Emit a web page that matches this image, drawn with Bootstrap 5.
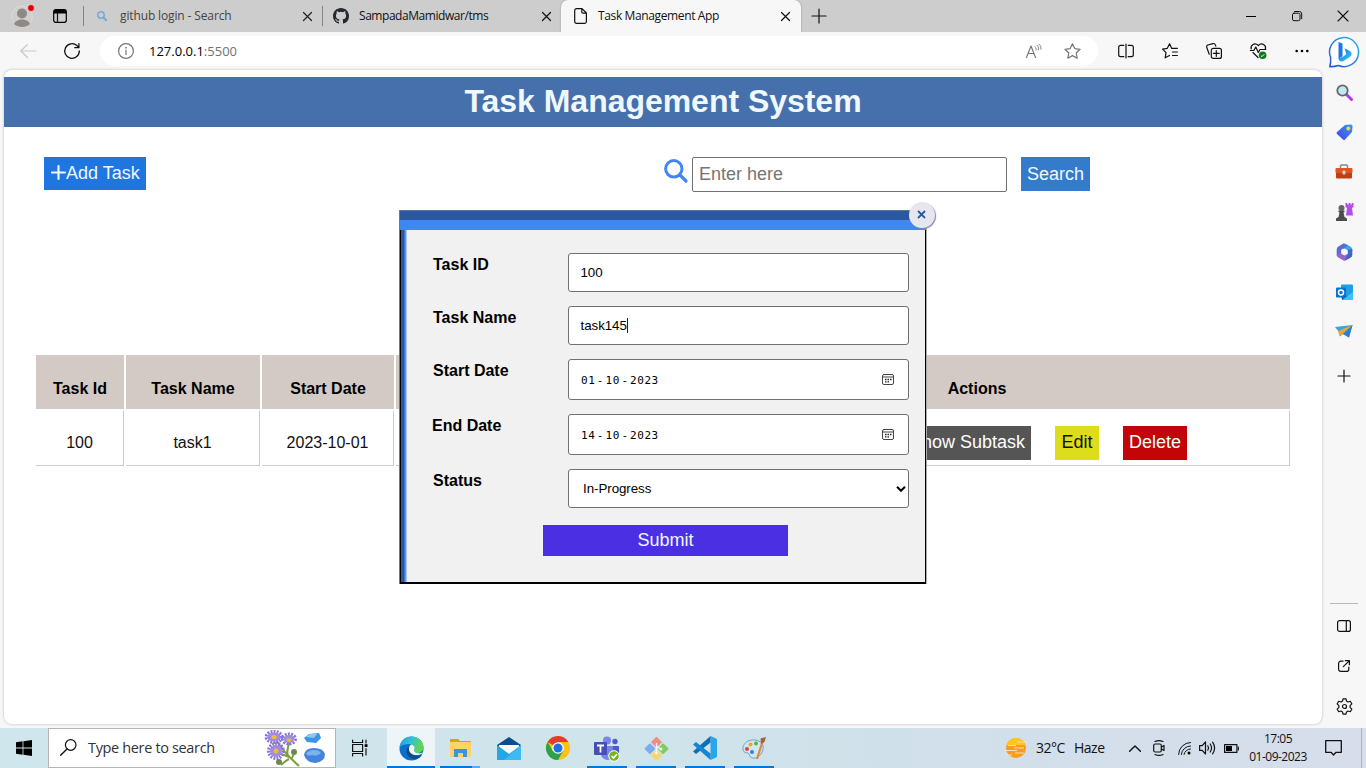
<!DOCTYPE html>
<html lang="en">
<head>
<meta charset="utf-8">
<meta name="viewport" content="width=device-width, initial-scale=1">
<title>Task Management App</title>
<link href="https://cdn.jsdelivr.net/npm/bootstrap@5.3.0/dist/css/bootstrap.min.css" rel="stylesheet">
<script src="https://cdn.jsdelivr.net/npm/bootstrap@5.3.0/dist/js/bootstrap.bundle.min.js" defer></script>
<style>
  body { width: 1366px; height: 768px; overflow: hidden; background: #f7f7f7; color: #111; font: 12px/16px "Open Sans", "Noto Sans", sans-serif; }
  svg { display: block; flex: none; overflow: visible; }
  .ln { fill: none; stroke: currentColor; stroke-width: 1.2; stroke-linecap: round; stroke-linejoin: round; }
  .slot { display: flex; align-items: center; justify-content: center; flex: none; }

  /* tab strip */
  .tabstrip { height: 32px; background: #cdcdcd; }
  .rule-v { width: 1px; height: 20px; background: #858585; flex: none; }
  .tab-item { height: 32px; flex: none; }
  .tab-item span { white-space: nowrap; }
  .tab-on { width: 240px; background: #f7f7f7; border-radius: 7px 7px 0 0; box-shadow: 0 0 2px rgba(0,0,0,.3); clip-path: inset(0 -3px 0 -3px); }

  /* toolbar */
  .toolbar { height: 38px; }
  .address { width: 998px; height: 30px; margin-left: 6px; flex: none; background: #fff; border-radius: 15px; }
  .url { font-size: 13px; letter-spacing: 0; color: #000; }
  .url i { font-style: normal; color: #727272; }
  .tool44 { width: 44px; }

  /* page */
  .viewport { width: 1318px; height: 654px; margin-left: 4px; background: #fff; border-radius: 8px; box-shadow: 0 0 3px rgba(0,0,0,.25); padding-top: 7px; font-family: "Liberation Sans", Arial, sans-serif; font-size: 16px; overflow: hidden; }
  .frame-wrap { width: 1322px; height: 696px; }
  .hero { height: 50px; background: #4670ac; color: #f0f8ff; font-size: 32px; line-height: 48px; font-weight: 700; margin: 0; letter-spacing: -.03px; }
  .flat { font-size: 18px; line-height: 21px; padding: 6px; white-space: nowrap; border: 0; }
  .actions-row { padding: 30px 0 0 40px; }
  .b-add { background: #1f76e0; color: #f0f8ff; width: 102px; height: 33px; }
  .b-search { background: #347bcb; color: #f0f8ff; width: 69px; height: 34px; margin-left: 14px; }
  .q { width: 315px; height: 35px; border: 1px solid #6f6f6f; border-radius: 2px; padding: 0 6px 2px; font-size: 18px; color: #757575; }
  .tasks { border-collapse: separate; border-spacing: 2px; table-layout: fixed; width: 1258px; margin: 161px 0 0 30px; text-align: center; color: #000; }
  .tasks th { background: #d4cac5; height: 54px; padding: 15px 0 0; border-bottom: 1px solid #ccc; font-weight: 700; }
  .tasks td { height: 55px; padding: 10px 0 0; border-right: 1px solid #ccc; border-bottom: 1px solid #ccc; color: #111; }
  .b-sub { background: #555; color: #fff; height: 34px; }
  .b-edit { background: #dddd1c; color: #111; width: 44px; height: 34px; }
  .b-del { background: #c10508; color: #fff; width: 64px; height: 34px; }
  .b-sub, .b-edit, .b-del { padding-top: 5px; padding-bottom: 7px; }

  /* dialog */
  .dlg { position: absolute; left: 399px; top: 178px; width: 528px; height: 374px; background: #f1f1f1; border: 1px solid #777; border-width: 0 1px 0 1px; border-right-color: #aaa; color: #000; font-family: "Liberation Sans", Arial, sans-serif; }
  .dlg-top { height: 20px; background: linear-gradient(#5177ab 0 1px, #2c58a0 1px 10px, #4285f4 10px); }
  .dlg-main { height: 354px; border: solid #000; border-width: 0 1px 2px 1px; background: linear-gradient(90deg, #3f5880 0 1px, #2c58a0 1px 3px, #3f76cf 3px 4px, #6097f0 4px 5px, #a9c5f3 5px 6px, #f1f1f1 6px); padding: 23px 15px 0 32px; }
  .closer { position: absolute; left: 509px; top: -8px; width: 26px; height: 26px; padding: 0 1px 1px 0; border-radius: 50%; background: #e6e7ee; box-shadow: 1px 1px 1px #8d7eae; color: #2c58a0; }
  .frow { margin-bottom: 14px; }
  .frow label { width: 135px; font-size: 16px; font-weight: 700; line-height: 18px; padding-top: 3px; flex: none; }
  .fld { width: 341px; height: 39px; border: 1px solid #707070; border-radius: 3px; background: #fff; font-size: 13.33px; padding: 0 11.5px; letter-spacing: -.05px; }
  .fld-d { height: 41px; padding: 1px 14px 0 12px; font: 11px "DejaVu Sans Mono", monospace; letter-spacing: .55px; }
  .fld-d b { font-weight: 400; margin: 0 1.5px; }
  .caret { width: 1px; height: 15px; background: #222; }
  .cal { color: #444; margin-right: -1px; }
  .cal .ln { stroke-width: 1; }
  .b-submit { width: 245px; height: 31px; background: #4b30e3; color: #f0f8ff; margin: 17px 0 0 110px; padding: 5px 0; }

  /* side rail */
  .rail { width: 44px; height: 696px; padding-bottom: 2px; }
  .rail .slot { width: 44px; height: 40px; }

  /* taskbar */
  .taskbar { height: 40px; background: linear-gradient(90deg, #cfe6ec 0, #cfe5eb 40%, #d0e0ea 65%, #d7ddeb 100%); color: #111; }
  .sbox { width: 288px; height: 40px; border: 1px solid #b5b5b5; background: #fff; font-size: 14.5px; letter-spacing: -.35px; color: #333; }
  .app { width: 48px; height: 40px; margin-right: 1px; position: relative; }
  .app-run::after { content: ""; position: absolute; left: 4px; right: 4px; bottom: 0; height: 2px; background: #0078d7; }
  .app-cur { background: #eef5f9; }
  .app-cur::after { left: 0; right: 0; }
  .app-two::after { background: linear-gradient(90deg, #0078d7 80%, #66a9e2 80%); }
  .wx { font-size: 14px; letter-spacing: -.5px; }
  .clock { width: 70px; line-height: 18px; letter-spacing: -.5px; }
</style>
</head>
<body class="d-flex flex-column">

<header class="tabstrip d-flex align-items-center">
  <div class="slot" style="width:44px"><svg width="24" height="24" viewBox="0 0 24 24"><circle cx="12" cy="12.500" r="10.500" fill="#d1cfcc" stroke="#dddad3"/><circle cx="12" cy="9.500" r="5" fill="#8d8986"/><path d="M4 20c2-6 14-6 16 0-4 4-12 4-16 0z" fill="#8d8986"/><circle cx="21" cy="4" r="3.500" fill="#e3000b" stroke="#eee" stroke-width=".7"/></svg></div>
  <div class="slot" style="width:32px"><svg width="14" height="14" viewBox="0 0 14 14"><rect x=".7" y=".7" width="12.600" height="12.600" rx="2" class="ln" style="stroke:#000"/><path d="M.7 4.500V2.500a2 2 0 0 1 2-1.800h8.600a2 2 0 0 1 2 1.800v2z"/><path d="M4.500 4v9" class="ln"/></svg></div>
  <div class="rule-v me-1" style="margin-left:7px"></div>
  <div class="tab-item d-flex align-items-center" style="width:234px;padding-left:9px;color:#444">
    <svg width="10" height="10" viewBox="0 0 10 10" fill="none" stroke="#75a9d4" stroke-width="1.500"><circle cx="4" cy="4" r="3.200"/><path d="M6.500 6.500l3.200 3.200" stroke-width="2"/></svg>
    <span class="flex-grow-1" style="padding-left:13px;letter-spacing:-.13px">github login - Search</span>
    <svg width="9" height="9" viewBox="0 0 9 9" style="margin-right:10px"><path d="M.5.5l8 8m0-8l-8 8" class="ln" style="stroke:#222"/></svg>
  </div>
  <div class="rule-v"></div>
  <div class="tab-item d-flex align-items-center" style="width:238px;padding-left:10px">
    <svg width="16" height="16" viewBox="0 0 16 16" fill="#24292f"><path d="M8 0C3.580 0 0 3.580 0 8c0 3.540 2.290 6.530 5.470 7.590.4.070.55-.17.55-.38 0-.19-.01-.82-.01-1.490-2.010.37-2.530-.49-2.690-.94-.09-.23-.48-.94-.82-1.130-.28-.15-.68-.52-.01-.53.63-.01 1.080.58 1.230.82.72 1.210 1.870.87 2.330.66.07-.52.28-.87.51-1.070-1.780-.2-3.640-.89-3.640-3.950 0-.87.31-1.590.82-2.150-.08-.2-.36-1.020.08-2.120 0 0 .67-.21 2.200.82a7.600 7.600 0 0 1 4 0c1.530-1.040 2.200-.82 2.200-.82.44 1.100.16 1.920.08 2.120.51.56.82 1.270.82 2.150 0 3.070-1.870 3.750-3.650 3.950.29.25.54.73.54 1.480 0 1.070-.01 1.930-.01 2.200 0 .21.15.46.55.38A8 8 0 0 0 16 8c0-4.420-3.580-8-8-8z"/></svg>
    <span class="flex-grow-1" style="padding-left:10px;letter-spacing:-.45px">SampadaMamidwar/tms</span>
    <svg width="9" height="9" viewBox="0 0 9 9" style="margin-right:10px"><path d="M.5.5l8 8m0-8l-8 8" class="ln"/></svg>
  </div>
  <div class="tab-item tab-on d-flex align-items-center" style="padding-left:13px">
    <svg width="13" height="16" viewBox="0 0 13 16"><path d="M2.500.6H8l4.400 4.400v8.600a1.800 1.800 0 0 1-1.800 1.800H2.500a1.800 1.800 0 0 1-1.800-1.800V2.400A1.800 1.800 0 0 1 2.500.6zM7.800.8v3.200c0 .8.400 1.200 1.200 1.200h3.200" class="ln"/></svg>
    <span class="flex-grow-1" style="padding-left:11px;letter-spacing:-.37px">Task Management App</span>
    <svg width="9" height="9" viewBox="0 0 9 9" style="margin-right:11px"><path d="M.5.5l8 8m0-8l-8 8" class="ln"/></svg>
  </div>
  <div class="slot" style="width:35px"><svg width="14" height="14" viewBox="0 0 14 14"><path d="M7 0v14M0 7h14" class="ln"/></svg></div>
  <div class="ms-auto d-flex">
    <div class="slot" style="width:46px"><svg width="10" height="10" viewBox="0 0 10 10"><path d="M0 5.500h10" stroke="#000"/></svg></div>
    <div class="slot" style="width:46px"><svg width="10" height="10" viewBox="0 0 10 10"><rect x=".5" y="2.200" width="7.500" height="7.500" rx="1.500" class="ln" style="stroke-width:1"/><path d="M2.500.5h4.800a2.400 2.400 0 0 1 2.400 2.400v4.800" class="ln" style="stroke-width:1"/></svg></div>
    <div class="slot" style="width:46px"><svg width="10" height="10" viewBox="0 0 10 10"><path d="M0 0l10 10M10 0L0 10" class="ln" style="stroke-width:1.100"/></svg></div>
  </div>
</header>

<div class="d-flex position-relative">
  <div class="frame-wrap">
    <nav class="toolbar d-flex align-items-center">
      <div class="slot" style="width:44px;padding-left:12px;color:#c9c9c9"><svg width="16" height="14" viewBox="0 0 16 14"><path d="M7.500.5L.8 7l6.700 6.500M1 7h15" class="ln"/></svg></div>
      <div class="slot" style="width:50px;padding-left:6px"><svg width="16" height="16" viewBox="0 0 16 16"><path d="M15.300 8a7.300 7.300 0 1 1-2.400-5.400l1.800 1.900M14.900.6v4.100h-4.100" class="ln" style="stroke-width:1.300"/></svg></div>
      <div class="address d-flex align-items-center">
        <div class="slot" style="width:49px;padding-left:3px;color:#767676"><svg width="16" height="16" viewBox="0 0 16 16"><circle cx="8" cy="8" r="7.400" class="ln"/><path d="M8 7v4.500" class="ln"/><circle cx="8" cy="4.700" r=".9" fill="currentColor"/></svg></div>
        <div class="url flex-grow-1">127.0.0.1<i>:5500</i></div>
        <div class="slot" style="width:39px;color:#767676"><svg width="15" height="14" viewBox="0 0 15 14"><path d="M.5 13.500L5 2l4.500 11.500M2 9.500h6" class="ln" style="stroke-width:1.150"/><path d="M9 2.700c1 .9 1.300 2 1.100 3.300M11 1.200c1.500 1.300 1.800 2.800 1.500 4.600M13 .2c1.700 1.500 2.200 3 2 5" class="ln" style="stroke-width:.9"/></svg></div>
        <div class="slot" style="width:39px;margin-right:6px;color:#767676"><svg width="17" height="16" viewBox="0 0 17 16"><path d="M8.500.8l2.300 4.800 5.300.7-3.900 3.700 1 5.200-4.700-2.600-4.700 2.600 1-5.200L.9 6.300l5.300-.7z" class="ln"/></svg></div>
      </div>
      <div class="slot tool44" style="margin-left:6px"><svg width="16" height="14" viewBox="0 0 16 14"><path d="M5.800 1.300H2.600A1.900 1.900 0 0 0 .7 3.200v7.600a1.900 1.900 0 0 0 1.900 1.900h3.200M10.200 1.300h3.200a1.900 1.900 0 0 1 1.900 1.900v7.600a1.900 1.900 0 0 1-1.900 1.900h-3.200M8 0v14" class="ln"/></svg></div>
      <div class="slot tool44"><svg width="16" height="16" viewBox="0 0 16 16"><path d="M15.400 5.300H9.600L7.600.8 5.300 5.300.6 6.100 4 9.700l-.8 5.100 4.300-2.300M10.500 9h4.900M10.500 12.500h4.900" class="ln"/></svg></div>
      <div class="slot tool44"><svg width="16" height="16" viewBox="0 0 16 16"><rect x="5.300" y="5.300" width="10.100" height="10.100" rx="2" class="ln"/><path d="M10.300 7.500v5.800M7.400 10.400h5.800M3.200 11.200L.8 4.500A1.900 1.900 0 0 1 1.800 2L7 .6a1.900 1.900 0 0 1 2.300 1.200l.5 1.300" class="ln"/></svg></div>
      <div class="slot tool44"><svg width="17" height="16" viewBox="0 0 17 16"><path d="M1.200 6C.2 2 4.800-.8 8.300 2.500 11.800-.8 16.400 2 15.400 6M.4 7.500h3.400l2-3.500 2.500 5.500 1.700-3h5.800M3 9.500l5 5" class="ln"/><circle cx="12.600" cy="12.300" r="3.800" fill="#12791c"/><path d="M11 12.800l1 .8 2.200-2.200" stroke="#fff" fill="none"/></svg></div>
      <div class="slot tool44"><svg width="14" height="4" viewBox="0 0 14 4"><circle cx="1.700" cy="2" r="1.300"/><circle cx="7" cy="2" r="1.300"/><circle cx="12.300" cy="2" r="1.300"/></svg></div>
    </nav>

    <main class="viewport">
      <h1 class="hero text-center">Task Management System</h1>
      <div class="actions-row d-flex align-items-start">
        <button class="flat b-add d-flex align-items-start"><svg width="16" height="16" viewBox="0 0 16 16" style="margin-top:1px"><path d="M8.500 2v13M2 8.500h13" stroke="#f0f8ff" stroke-width="2.200" stroke-linecap="round"/></svg>Add Task</button>
        <svg width="24" height="24" viewBox="0 0 24 24" style="margin:2px 4px 0 518px"><circle cx="9.800" cy="9.800" r="8.200" fill="none" stroke="#4285f4" stroke-width="3"/><path d="M16 16l6 6" stroke="#4285f4" stroke-width="3.200" stroke-linecap="round"/></svg>
        <div class="q d-flex align-items-center">Enter here</div>
        <button class="flat b-search">Search</button>
      </div>
      <table class="tasks">
        <colgroup><col style="width:88px"><col style="width:134px"><col style="width:132px"><col style="width:132px"><col style="width:132px"><col></colgroup>
        <tr><th>Task Id</th><th>Task Name</th><th>Start Date</th><th></th><th></th><th>Actions</th></tr>
        <tr><td>100</td><td>task1</td><td>2023-10-01</td><td></td><td></td>
          <td><div class="d-flex" style="gap:24px;padding-left:240px"><button class="flat b-sub">Show Subtask</button><button class="flat b-edit">Edit</button><button class="flat b-del">Delete</button></div></td></tr>
      </table>
    </main>
  </div>

  <aside class="rail d-flex flex-column">
    <div class="slot" style="padding-bottom:1px"><svg width="32" height="32" viewBox="0 0 32 32"><defs><linearGradient id="bg1" x1="0" y1="1" x2="1" y2="0"><stop offset="0" stop-color="#2453d8"/><stop offset="1" stop-color="#28b8ee"/></linearGradient><linearGradient id="bg2" x1="0" y1="0" x2="1" y2="1"><stop offset="0" stop-color="#1670f0"/><stop offset="1" stop-color="#35cdf2"/></linearGradient></defs><path d="M1.800 30.700Q3 27 2.600 21.500A14.500 14.500 0 1 1 10.500 29.500Q7 30.700 1.800 30.700z" fill="#fff" stroke="url(#bg1)" stroke-width="1.500" stroke-linejoin="round"/><path d="M10.500 6l4 1.600v12.700l-4 2.500z" fill="#1b76ef"/><path d="M16.500 12.200l5 2.600c2.800 1.500 2.800 4.600.3 6.200l-6.800 4.200c-1.700.8-4.500-.2-4.500-3l4-1.300 3.800-2.600z" fill="url(#bg2)"/></svg></div>
    <div class="slot"><svg width="17" height="17" viewBox="0 0 17 17"><path d="M10.500 10.500l5 5" stroke="#b23be8" stroke-width="3" stroke-linecap="round"/><circle cx="6.500" cy="6.500" r="5.200" fill="#c3e7f7" stroke="#666" stroke-width="1.800"/></svg></div>
    <div class="slot"><svg width="17" height="17" viewBox="0 0 17 17"><defs><linearGradient id="tg" x1="1" y1="0" x2="0" y2="1"><stop offset="0" stop-color="#2d9af2"/><stop offset="1" stop-color="#4b43e8"/></linearGradient></defs><path d="M9 1l6-.5q1.500 0 1.500 1.500L16 8l-7 7.500q-1 1-2 0L1 10q-1-1 0-2z" fill="url(#tg)"/><circle cx="12.300" cy="4.500" r="1.900" fill="#ffd33d"/></svg></div>
    <div class="slot"><svg width="18" height="16" viewBox="0 0 18 16"><path d="M5.500 4V2q0-1 1-1h5q1 0 1 1v2" fill="none" stroke="#888" stroke-width="1.500"/><rect x=".5" y="4" width="17" height="5" rx="1" fill="#df5420"/><path d="M1 9h16v4.500q0 1-1 1H2q-1 0-1-1z" fill="#c23e12"/><rect x="7.500" y="6.500" width="3" height="4" rx="1" fill="#d3d3d3"/></svg></div>
    <div class="slot"><svg width="19" height="18" viewBox="0 0 19 18"><path d="M10.500 0h1.800v1.500h1.400V0h1.800v1.500h1.300V0h1.700v4l-1.500 1 1 7.500h-7l1-7.500-1.500-1z" fill="#b64cec"/><circle cx="6.500" cy="5" r="3" fill="#666"/><path d="M3.500 7.500h6V9L8.500 9.500l1 4.500 2.500 1.500V18H1v-2.500L3.500 14l1-4.500-1-.5z" fill="#4d4d4d"/></svg></div>
    <div class="slot"><svg width="17" height="18" viewBox="0 0 17 18"><path d="M6 1.400Q8.500-.6 11 1.400L15 4Q16.500 5 16.300 8L12 9 6.500 5.500z" fill="#37a7e7"/><path d="M7.500.5L2 3.800Q.7 4.700.7 6.500v6L5.500 11V6.500L11.500 3z" fill="#5b6bd5"/><path d="M.7 11.500Q.7 13.500 2 14.300l5 3q1.500.8 3 0L14 15 11.500 11 5.500 10z" fill="#9a63c9"/><path d="M16.300 6v6q0 1.700-1.500 2.600L9 17.600 11.500 11V7z" fill="#4463c9"/><path d="M8.500 5.500l3.200 1.800v3.500L8.500 12.600l-3.200-1.800V7.300z" fill="#f7f7f7"/></svg></div>
    <div class="slot"><svg width="17" height="17" viewBox="0 0 17 17"><rect x="5" y=".5" width="12" height="13" rx="1" fill="#1f9fe7"/><path d="M5 8l12 8H6z" fill="#0864b1"/><path d="M17 8v8H6z" fill="#3cc3ef"/><rect x="0" y="3.500" width="10" height="10" rx="1" fill="#0b70c8"/><circle cx="5" cy="8.500" r="2.500" fill="none" stroke="#fff" stroke-width="1.500"/></svg></div>
    <div class="slot"><svg width="18" height="14" viewBox="0 0 18 14"><path d="M0 2l17.500-2L14 12.500 8 9l-3 2.500L4 7z" fill="#31a5e9"/><path d="M3 6L17.500 0 8 9l-3.500 2z" fill="#eda52e"/><path d="M17.500 0L14 12.500 8 9z" fill="#2a7cdd"/></svg></div>
    <div class="slot" style="height:48px"><svg width="12" height="12" viewBox="0 0 12 12"><path d="M6 0v12M0 6h12" class="ln"/></svg></div>
    <div class="mt-auto mx-auto" style="width:28px;height:1px;background:#b9b9b9;margin-bottom:2px"></div>
    <div class="slot"><svg width="14" height="12" viewBox="0 0 14 12"><rect x=".6" y=".6" width="12.800" height="10.800" rx="2" class="ln"/><path d="M9.300.6v10.800" class="ln"/></svg></div>
    <div class="slot"><svg width="12" height="12" viewBox="0 0 12 12"><path d="M5 1.200H2.800A2.200 2.200 0 0 0 .6 3.400v5.800a2.200 2.200 0 0 0 2.200 2.200h5.800a2.200 2.200 0 0 0 2.200-2.200V7M7.300.6h4.100v4.100M11.200.8L5.300 6.700" class="ln"/></svg></div>
    <div class="slot"><svg width="17" height="17" viewBox="0 0 17 17"><path d="M7 .8h3l.5 2.300 1.500.9 2.300-.7 1.500 2.500-1.700 1.800v1.800l1.700 1.800-1.500 2.500-2.300-.7-1.500.9-.5 2.300H7l-.5-2.300L5 13l-2.300.7-1.500-2.500 1.700-1.800V7.600L1.200 5.800l1.500-2.500L5 4l1.500-.9z" class="ln"/><circle cx="8.500" cy="8.500" r="2" class="ln"/></svg></div>
  </aside>

  <section class="dlg">
    <div class="dlg-top"></div>
    <form class="dlg-main">
      <div class="frow d-flex"><label>Task ID</label><div class="fld d-flex align-items-center">100</div></div>
      <div class="frow d-flex"><label>Task Name</label><div class="fld d-flex align-items-center">task145<span class="caret"></span></div></div>
      <div class="frow d-flex"><label>Start Date</label><div class="fld fld-d d-flex align-items-center justify-content-between"><span>01<b>-</b>10<b>-</b>2023</span><svg class="cal" width="13" height="12" viewBox="0 0 13 12"><rect x=".5" y=".5" width="11" height="10" rx="1.500" class="ln"/><path d="M.5 3h11" class="ln"/><path d="M3 5.500h6.500M3 7.800h4" stroke="#222" stroke-width="1.300" stroke-dasharray="1.500 1"/></svg></div></div>
      <div class="frow d-flex"><label style="margin-left:-1px;width:136px">End Date</label><div class="fld fld-d d-flex align-items-center justify-content-between"><span>14<b>-</b>10<b>-</b>2023</span><svg class="cal" width="13" height="12" viewBox="0 0 13 12"><rect x=".5" y=".5" width="11" height="10" rx="1.500" class="ln"/><path d="M.5 3h11" class="ln"/><path d="M3 5.500h6.500M3 7.800h4" stroke="#222" stroke-width="1.300" stroke-dasharray="1.500 1"/></svg></div></div>
      <div class="frow d-flex"><label>Status</label><div class="fld d-flex align-items-center justify-content-between" style="padding:0 2px 0 14px">In-Progress<svg width="10" height="6" viewBox="0 0 10 6"><path d="M1 .8l4 4 4-4" fill="none" stroke="#000" stroke-width="2"/></svg></div></div>
      <button type="button" class="flat b-submit d-block">Submit</button>
    </form>
    <div class="closer slot"><svg width="9" height="9" viewBox="0 0 9 9"><path d="M1 1l7 7M8 1L1 8" stroke="currentColor" stroke-width="1.800"/></svg></div>
  </section>
</div>

<footer class="taskbar d-flex align-items-center">
  <div class="slot" style="width:48px"><svg width="16" height="16" viewBox="0 0 16 16"><path d="M0 2.300L6.600 1.300v6.300H0zM7.400 1.200L16 0v7.600H7.400zM0 8.400h6.600v6.300L0 13.700zM7.400 8.400H16V16l-8.600-1.200z"/></svg></div>
  <div class="sbox d-flex align-items-center">
    <svg width="17" height="17" viewBox="0 0 17 17" style="margin:-2px 11px 0 11px"><circle cx="10.700" cy="6" r="5.300" class="ln" style="stroke:#111"/><path d="M7 10l-6.300 6.300" class="ln" style="stroke:#111;stroke-width:1.400"/></svg>
    <span class="flex-grow-1">Type here to search</span>
    <svg width="63" height="38" viewBox="0 0 63 38" style="margin-right:9px"><g stroke="#7c9e3c" stroke-width="2" fill="none"><path d="M12 9q8 14 24 28M27 12q-4 10-2 15M14 24q8 2 12 4M32 22q-2 6-4 8M18 36q4-4 8-6"/></g><g stroke="#8b76dc" stroke-width="4" fill="none" stroke-dasharray="1.800 1.100"><ellipse cx="11" cy="8" rx="7.500" ry="5"/><ellipse cx="26" cy="10" rx="6" ry="4.500"/><circle cx="13" cy="22" r="7"/></g><g fill="#a18be8"><ellipse cx="11" cy="8" rx="6.500" ry="4.500"/><ellipse cx="26" cy="10" rx="5" ry="4"/><circle cx="13" cy="22" r="6"/></g><g fill="#eebb2d"><ellipse cx="11" cy="8" rx="2.800" ry="2"/><ellipse cx="26" cy="11" rx="2.500" ry="1.800"/><circle cx="13" cy="22" r="2.500"/></g><circle cx="31" cy="23" r="3" fill="#6a8b4c"/><circle cx="16" cy="33" r="3" fill="#6a8b4c"/><path d="M41 9l5-4 10-1 2 5-5 5-9-1z" fill="#3e93e6"/><path d="M43 8l4-3 7 0-3 4z" fill="#8cc8f6"/><path d="M41 26q1-7 10-7t11 6q0 8-10 9-9-1-11-8z" fill="#4484dc"/><path d="M43 25q2-4 8-4 5 0 7 3-4 4-9 2-3 2-6-1z" fill="#7bb2ef"/></svg>
  </div>
  <div class="slot" style="width:51px;padding-right:3px"><svg width="16" height="16" viewBox="0 0 16 16"><g class="ln" style="stroke:#111"><path d="M.6 0v2.500h10V0M.6 16v-2.500h10V16M14 0v3M14 8.500V15"/><rect x=".6" y="4.500" width="10" height="7"/></g><rect x="12.700" y="4.200" width="2.800" height="2.800"/></svg></div>

  <div class="app app-run app-cur slot"><svg width="25" height="25" viewBox="0 0 25 25"><defs><linearGradient id="eg" x1="0" y1="0" x2="1" y2=".3"><stop offset="0" stop-color="#2298df"/><stop offset=".5" stop-color="#2fc1d6"/><stop offset="1" stop-color="#65d64b"/></linearGradient></defs><circle cx="12.500" cy="12.500" r="12" fill="#0d6fc7"/><path d="M.6 11C2 4 7 .5 12.500.5c7 0 12 5 12 10.500 0 4-3 6-6.500 6-3 0-4-1.500-3-3 1.500-3-1-6-5-6-4 0-7 1-9.400 3z" fill="url(#eg)"/><path d="M9 11c-4 5 0 12 7 12 3 0 5-1.500 7-4-7 3-13-1-12-7z" fill="#114a8b"/><path d="M15 14c1.500-2.500 0-5-3-5.500-3 2-3 8 2 10 4 1.500 8 0 9.700-1.500l1.300-1c-3 2-10 2-10-2z" fill="#eef5f9"/></svg></div>
  <div class="app app-run app-two slot"><svg width="23" height="20" viewBox="0 0 23 20"><path d="M1 1h8l2 2h10q1 0 1 1v14H1z" fill="#dca11a"/><rect x="1" y="4" width="21" height="15" rx="1" fill="#ffd467"/><path d="M5 19v-8h13v8h-4v-4H9v4z" fill="#3b95dd"/></svg></div>
  <div class="app slot"><svg width="24" height="24" viewBox="0 0 24 24"><path d="M0 9L12 1l12 8v4H0z" fill="#0d4c8d"/><path d="M2 9h20v6l-10 5-10-5z" fill="#f4f7fb"/><path d="M0 9l12 9 12-9v15H0z" fill="#25a5e6"/><path d="M24 9L7 24h17z" fill="#3dbaf0"/></svg></div>
  <div class="app slot"><svg width="24" height="24" viewBox="0 0 24 24"><circle cx="12" cy="12" r="12" fill="#fbc116"/><path d="M12 12L1.600 6A12 12 0 0 1 22.400 6H12z" fill="#e33b2e"/><path d="M1.600 6A12 12 0 0 0 12 24l5.200-9H12L6.800 15z" fill="#2ba24c"/><circle cx="12" cy="12" r="5.800" fill="#fff"/><circle cx="12" cy="12" r="4.500" fill="#1f6fe6"/></svg></div>
  <div class="app app-run slot"><svg width="26" height="25" viewBox="0 0 26 25"><circle cx="13" cy="4.500" r="4" fill="#7b83eb"/><circle cx="21" cy="5.500" r="2.700" fill="#5059c9"/><path d="M16 10h8q1 0 1 1v6q0 4-5 5h-4z" fill="#5059c9"/><path d="M7 10h12v9q-1 5-6 5-5-1-6-5z" fill="#7b83eb"/><rect x="0" y="6" width="13" height="13" rx="1" fill="#464eb8"/><path d="M3 9.500h7M6.500 9.500v7" stroke="#fff" stroke-width="1.800"/><circle cx="20" cy="20" r="5.300" fill="#78b51d" stroke="#fff" stroke-width="1"/><path d="M17.500 20l2 2 3.500-4" stroke="#fff" stroke-width="1.600" fill="none"/></svg></div>
  <div class="app app-run slot"><svg width="25" height="25" viewBox="0 0 25 25"><g transform="rotate(45 12.500 12.500)"><rect x="4" y="4" width="8" height="8" rx="1" fill="#f28b83"/><rect x="13.300" y="4" width="8" height="8" rx="1" fill="#80cb62"/><rect x="4" y="13.300" width="8" height="8" rx="1" fill="#7cadf3"/><rect x="13.300" y="13.300" width="8" height="8" rx="1" fill="#f8d46a"/></g><path d="M12.500 7v9M12.500 10l4 3" stroke="#eef3f4" stroke-width="1.400"/><circle cx="12.500" cy="17" r="1.600" fill="#eef3f4"/><circle cx="17" cy="13" r="1.500" fill="#eef3f4"/></svg></div>
  <div class="app app-run slot"><svg width="24" height="24" viewBox="0 0 24 24"><path d="M17.500 0L24 3v18l-6.500 3z" fill="#2aa5ee"/><path d="M17.500 0v6.500L3 18l-3-2.500z" fill="#0a6fbd"/><path d="M0 8.500L3 6l14.500 11.500V24z" fill="#1684cf"/></svg></div>
  <div class="app app-run slot"><svg width="25" height="24" viewBox="0 0 25 24"><path d="M1 14C0 8 6 3 13 4c6 1 9 4 8 9-1 6-6 10-11 9-3-1-2-4-4-5-2-.5-4 0-5-3z" fill="#cfe6f3" stroke="#7ba2bd"/><circle cx="5" cy="13" r="2" fill="#e3423a"/><circle cx="8.500" cy="8.500" r="2" fill="#f1a42b"/><circle cx="14" cy="7.500" r="2" fill="#57b53d"/><circle cx="10" cy="16" r="2" fill="#3b7edb"/><path d="M21 4l-6 19" stroke="#dd8b3c" stroke-width="2.200"/><path d="M18.500 2.500L24 1l-1.500 5-3.500 2z" fill="#9a6840"/></svg></div>

  <div class="ms-auto d-flex align-items-center">
    <svg width="22" height="20" viewBox="0 0 22 20"><circle cx="11" cy="10" r="10" fill="#f99b1b"/><path d="M1.500 7A10 10 0 0 1 20.500 7z" fill="#ffc51d"/><path d="M12 4h10M3 7.500h8M9 10h10M0 12.500h12M10 15h9M0 17h7" stroke="#f5dfbc" stroke-width="1"/></svg>
    <span class="wx" style="width:38px;margin-left:9px">32°C</span><span class="wx" style="width:48px">Haze</span>
    <div class="slot" style="width:24px;padding-left:2px"><svg width="12" height="7" viewBox="0 0 12 7"><path d="M.6 6.300L6 1l5.400 5.300" class="ln" style="stroke-width:1.400"/></svg></div>
    <div class="slot" style="width:26px"><svg width="12" height="16" viewBox="0 0 12 16"><rect x=".7" y="4" width="7.600" height="8" rx="1.500" class="ln"/><path d="M8.500 7l2.500-1.500v5L8.500 9M2 1.500q4-1.800 8 0M2 14.500q4 1.800 8 0" class="ln"/></svg></div>
    <div class="slot" style="width:24px"><svg width="13" height="14" viewBox="0 0 13 14"><path d="M.6 13.500A12 12 0 0 1 12.500 1.500M3.300 13.500a9.200 9.200 0 0 1 9.200-8.500M6 13.500A6.500 6.500 0 0 1 12.500 8" class="ln" style="stroke-width:1"/><circle cx="11" cy="12" r="1.500"/></svg></div>
    <div class="slot" style="width:23px"><svg width="17" height="14" viewBox="0 0 17 14"><path d="M.6 4.600h2.600L6.500 1v12L3.200 9.400H.6zM8.800 4.800q1.600 2.200 0 4.400M11.200 3q2.700 4 0 8M13.600 1.200q4 5.800 0 11.600" class="ln"/></svg></div>
    <div class="slot" style="width:24px"><svg width="15" height="9" viewBox="0 0 15 9"><rect x=".6" y=".6" width="12.300" height="7.800" class="ln"/><path d="M14.300 3v3" class="ln"/><rect x="2" y="2" width="6" height="5"/></svg></div>
    <div class="clock text-center">17:05<br>01-09-2023</div>
    <div class="slot" style="width:40px"><svg width="17" height="16" viewBox="0 0 17 16"><path d="M.7.7h15.600v11.600H11L8.500 15 6 12.300H.7z" class="ln" style="stroke-width:1.300"/></svg></div>
    <div style="width:1px;height:40px;background:#a9b4c2;margin:0 4px 0 8px"></div>
  </div>
</footer>
</body>
</html>
